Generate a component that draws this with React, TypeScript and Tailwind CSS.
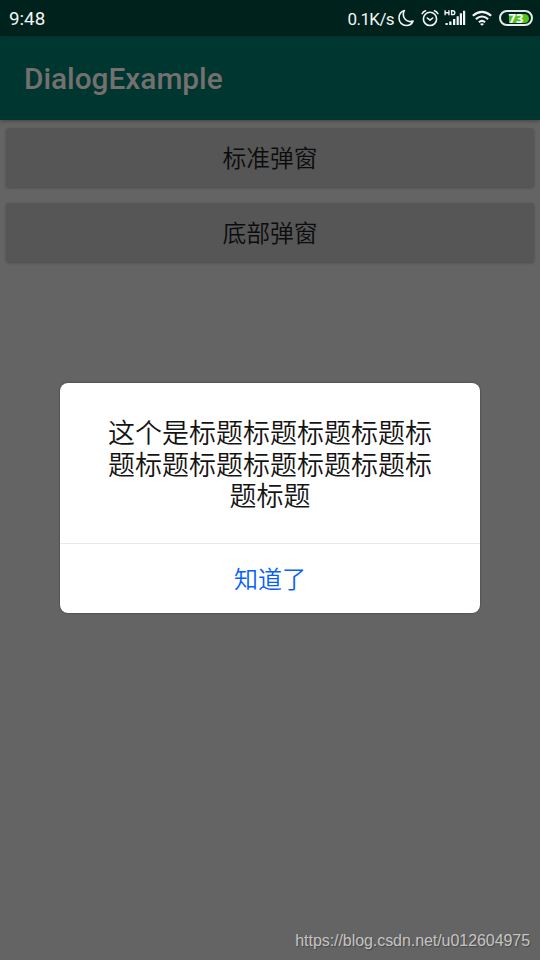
import React from "react";

const cjk = "font-['Noto_Sans_CJK_SC',sans-serif]";

function Moon() {
  return (
    <svg width="16" height="18" viewBox="0 0 16 18" fill="none" stroke="#f1f5f4" strokeWidth="1.600" strokeLinejoin="round">
      <path d="M6.400 1.600C3 2.700 1 5.600 1 9c0 4.200 3.200 7.500 7.300 7.500 3 0 5.600-1.700 6.700-4.400-1 .4-2 .6-3 .5C8 12.300 5.300 9.200 5.300 5.400c0-1.400.3-2.700 1.100-3.800z" />
    </svg>
  );
}

function Alarm() {
  return (
    <svg width="18" height="18" viewBox="0 0 18 18" fill="none" stroke="#f1f5f4" strokeWidth="1.600" strokeLinecap="round" strokeLinejoin="round">
      <circle cx="9" cy="9.900" r="6.600" />
      <path d="M1.200 4.600Q2.200 2.600 4.500 1.800M16.800 4.600Q15.800 2.600 13.500 1.800M6.300 9 9 11.200 11.700 9" />
    </svg>
  );
}

function Signal() {
  return (
    <svg width="22" height="18" viewBox="0 0 22 18" fill="#f1f5f4">
      <path d="M1.500 14h2.200v2H1.500zM5.200 12.500h2.300V16H5.200zM9 10h2.300v6H9zM12.600 7.200h2.200V16h-2.200zM15.800 4.300H18V16h-2.200zM19 1.800h2.200V16H19z" />
      <path d="M1.100 1.200v5M4.900 1.200v5M1.100 3.700h3.800M7.600 1.800v3.800h1.100c1.300 0 2.100-.7 2.100-1.900s-.8-1.900-2.100-1.900z" fill="none" stroke="#f1f5f4" strokeWidth="1.400" />
    </svg>
  );
}

function Wifi() {
  return (
    <svg width="20" height="18" viewBox="0 0 20 18" fill="none" stroke="#f1f5f4" strokeWidth="2.100">
      <path d="M.8 6.700Q10-1 19.200 6.700M3.900 10.100q6.100-5.200 12.200 0M6.900 13.200q3.100-2.500 6.200 0" />
      <path d="m10 16.800-2-1.900q2-1.500 4 0z" fill="#f1f5f4" stroke="none" />
    </svg>
  );
}

function Battery() {
  return (
    <div className="relative flex h-4 w-[34px] items-center justify-center rounded-full border-2 border-[#e7ecea]">
      <div className="absolute inset-y-[1.500px] right-[2px] left-[8px] rounded-r-full bg-[#4fc41c]" />
      <span className="relative font-['Open_Sans',sans-serif] text-[13px] leading-none font-bold text-white">73</span>
    </div>
  );
}

function ActionButton({ children }: { children: React.ReactNode }) {
  return (
    <button className={`${cjk} flex h-[59px] w-full items-center justify-center rounded-[3px] bg-[#565656] pb-px text-[23.800px] leading-none font-[350] text-[#0c0c0c] shadow-[0_1px_3px_rgba(0,0,0,0.250)]`}>
      {children}
    </button>
  );
}

export default function App() {
  return (
    <div className="relative flex h-[960px] w-[540px] flex-col overflow-hidden bg-[#646464]">
      <header className="flex h-9 shrink-0 items-center bg-[#00221d] text-[#f1f5f4]">
        <span className="mt-0.5 ml-[9px] font-[Roboto,sans-serif] text-[18.800px] leading-none">9:48</span>
        <div className="ml-auto flex items-center pr-[7px]">
          <span className="mt-0.5 mr-[4px] font-[Roboto,sans-serif] text-[17px] leading-none tracking-[-0.600px]">0.1K/s</span>
          <Moon />
          <span className="w-[7px]" />
          <Alarm />
          <span className="w-[5px]" />
          <Signal />
          <span className="w-[6px]" />
          <Wifi />
          <span className="w-[7px]" />
          <Battery />
        </div>
      </header>
      <div className="z-10 flex h-[84px] shrink-0 items-center bg-[#003630] pt-0.5 pl-6 shadow-[0_1px_4px_rgba(0,0,0,0.350)]">
        <h1 className="font-[Roboto,sans-serif] text-[29.800px] leading-none font-medium text-[#757070]">DialogExample</h1>
      </div>
      <main className="flex flex-col gap-4 px-1.5 pt-2">
        <ActionButton>标准弹窗</ActionButton>
        <ActionButton>底部弹窗</ActionButton>
      </main>

      <section role="dialog" className={`${cjk} absolute top-[383px] left-[60px] flex h-[230px] w-[420px] flex-col rounded-lg bg-white shadow-[0_0_2px_rgba(0,0,0,0.500)]`}>
        <div className="flex h-[161px] flex-col items-center border-b border-[#e9e9e9] pt-[33px] text-[27px] leading-[31.500px] font-[350] text-[#141414]">
          <p className="w-[326px] text-center break-all">这个是标题标题标题标题标题标题标题标题标题标题标题标题</p>
        </div>
        <button className="flex flex-1 items-center justify-center pb-px text-[24px] leading-none font-[350] text-[#0560fb]">知道了</button>
      </section>

      <footer className="mt-auto mr-[10px] mb-[10px] self-end font-['Liberation_Sans',Arial,sans-serif] text-[16px] leading-[18px] tracking-[-0.060px] text-[#c4c4c4] [text-shadow:1px_1px_1px_rgba(0,0,0,0.300)]">
        https://blog.csdn.net/u012604975
      </footer>
    </div>
  );
}
